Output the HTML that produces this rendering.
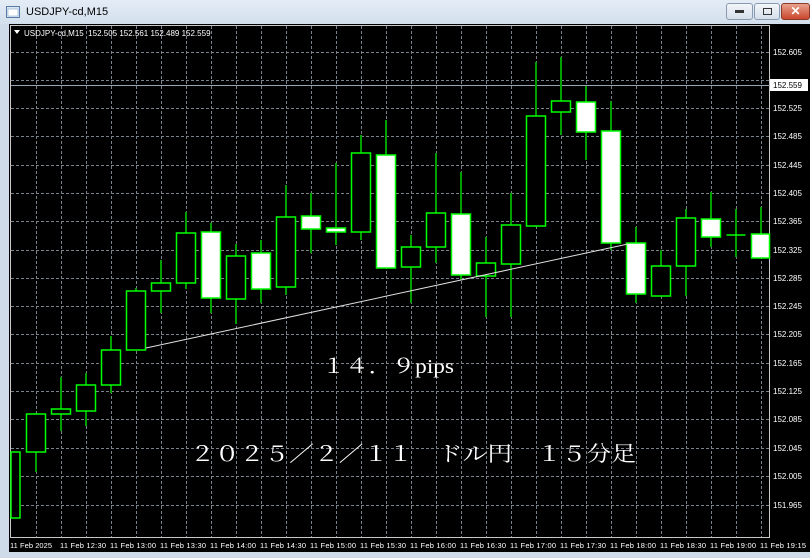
<!DOCTYPE html><html><head><meta charset="utf-8"><style>
body{margin:0;width:810px;height:558px;overflow:hidden;background:#cfdbe8;font-family:"Liberation Sans",sans-serif}
#t{position:absolute;left:0;top:0;width:810px;height:24px;background:linear-gradient(#e4edf6,#d3dfec)}
#t span{position:absolute;left:26px;top:6px;font-size:11px;color:#000}
#c{position:absolute;left:9px;top:24px;width:801px;height:528px;background:#000}
.b{position:absolute;top:3px;height:15px;border:1px solid #8a9bb0;border-radius:3px;background:linear-gradient(#f3f6fa,#d5dfea)}
</style></head><body>
<div id="t"><svg style="position:absolute;left:6px;top:5px" width="14" height="14"><rect x="0.5" y="1.5" width="13" height="11" fill="#dbe7f5" stroke="#5a7ea6"/><rect x="2" y="4" width="10" height="7" fill="#fff" stroke="#7a9cc0" stroke-width=".5"/></svg><span>USDJPY-cd,M15</span>
<div class="b" style="left:726px;width:25px"><div style="margin:6px auto;width:9px;height:3px;background:#333"></div></div>
<div class="b" style="left:754px;width:24px"><div style="margin:4px auto;width:7px;height:5px;border:1px solid #333"></div></div>
<div class="b" style="left:781px;width:27px;background:linear-gradient(#e8a28e,#c9462c);border-color:#8b3a2a;color:#fff;font-size:12px;text-align:center;line-height:15px;font-weight:bold">✕</div></div>
<div id="c"></div>
<svg style="position:absolute;left:0;top:0" width="810" height="558" font-family="Liberation Sans,sans-serif">
<rect x="10.5" y="25.5" width="759" height="512" fill="none" stroke="#c8c8c8"/>
<g stroke="#7a828c" stroke-dasharray="3,2" stroke-width="1">
<path d="M11 52.5H770M11 80.5H770M11 108.5H770M11 136.5H770M11 165.5H770M11 193.5H770M11 221.5H770M11 250.5H770M11 278.5H770M11 306.5H770M11 334.5H770M11 363.5H770M11 391.5H770M11 419.5H770M11 448.5H770M11 476.5H770M11 505.5H770"/>
<path d="M36.5 26V537M61.5 26V537M86.5 26V537M111.5 26V537M136.5 26V537M161.5 26V537M186.5 26V537M211.5 26V537M236.5 26V537M261.5 26V537M286.5 26V537M311.5 26V537M336.5 26V537M361.5 26V537M386.5 26V537M411.5 26V537M436.5 26V537M461.5 26V537M486.5 26V537M511.5 26V537M536.5 26V537M561.5 26V537M586.5 26V537M611.5 26V537M636.5 26V537M661.5 26V537M686.5 26V537M711.5 26V537M736.5 26V537M761.5 26V537"/>
</g>
<line x1="11" y1="85.5" x2="770" y2="85.5" stroke="#9aa4b0"/>
<g stroke="#00a000" stroke-width="2">
<path d="M36 413V472M61 377V431M86 373V426M111 336V393M136 288V350M161 260V313M186 212V289M211 223V313M236 244V324M261 240V303M286 185V295M311 193V253M336 163V245M361 135V240M386 120V268M411 235V303M436 153V263M461 172V280M486 237V317M511 193V317M536 62V227M561 57V135M586 86V160M611 101V250M636 227V303M661 250V296M686 209V296M711 192V247M736 209V257M761 207V258"/>
</g>
<g stroke="#00ff00" stroke-width="1.5">
<rect x="11" y="452" width="9" height="66" fill="#000"/>
<rect x="26.5" y="414" width="19" height="38" fill="#000"/>
<rect x="51.5" y="409" width="19" height="5" fill="#000"/>
<rect x="76.5" y="385" width="19" height="26" fill="#000"/>
<rect x="101.5" y="350" width="19" height="35" fill="#000"/>
<rect x="126.5" y="291" width="19" height="59" fill="#000"/>
<rect x="151.5" y="283" width="19" height="8" fill="#000"/>
<rect x="176.5" y="233" width="19" height="50" fill="#000"/>
<rect x="201.5" y="232" width="19" height="66" fill="#fff"/>
<rect x="226.5" y="256" width="19" height="43" fill="#000"/>
<rect x="251.5" y="253" width="19" height="36" fill="#fff"/>
<rect x="276.5" y="217" width="19" height="70" fill="#000"/>
<rect x="301.5" y="216" width="19" height="13" fill="#fff"/>
<rect x="326.5" y="228" width="19" height="4" fill="#fff"/>
<rect x="351.5" y="153" width="19" height="79" fill="#000"/>
<rect x="376.5" y="155" width="19" height="113" fill="#fff"/>
<rect x="401.5" y="247" width="19" height="20" fill="#000"/>
<rect x="426.5" y="213" width="19" height="34" fill="#000"/>
<rect x="451.5" y="214" width="19" height="61" fill="#fff"/>
<rect x="476.5" y="263" width="19" height="13" fill="#000"/>
<rect x="501.5" y="225" width="19" height="39" fill="#000"/>
<rect x="526.5" y="116" width="19" height="110" fill="#000"/>
<rect x="551.5" y="101" width="19" height="11" fill="#000"/>
<rect x="576.5" y="102" width="19" height="30" fill="#fff"/>
<rect x="601.5" y="131" width="19" height="112" fill="#fff"/>
<rect x="626.5" y="243" width="19" height="51" fill="#fff"/>
<rect x="651.5" y="266" width="19" height="30" fill="#000"/>
<rect x="676.5" y="218" width="19" height="48" fill="#000"/>
<rect x="701.5" y="219" width="19" height="18" fill="#fff"/>
<path d="M726.5 235H745.5"/>
<rect x="751.5" y="234" width="18" height="24" fill="#fff"/>
</g>
<line x1="146" y1="348" x2="628" y2="244" stroke="#e0e0e0" stroke-width="1"/>
<g fill="#fff" font-size="8">
<path d="M14 30l6 0-3 4z"/>
<text x="24" y="36">USDJPY-cd,M15&#160;&#160;152.505 152.561 152.489 152.559</text>
<text x="773" y="55">152.605</text><text x="773" y="111">152.525</text><text x="773" y="139">152.485</text><text x="773" y="168">152.445</text><text x="773" y="196">152.405</text><text x="773" y="224">152.365</text><text x="773" y="253">152.325</text><text x="773" y="281">152.285</text><text x="773" y="309">152.245</text><text x="773" y="337">152.205</text><text x="773" y="366">152.165</text><text x="773" y="394">152.125</text><text x="773" y="422">152.085</text><text x="773" y="451">152.045</text><text x="773" y="479">152.005</text><text x="773" y="508">151.965</text>
<rect x="770" y="79" width="38" height="12" fill="#fff"/>
<text x="773" y="88" fill="#000">152.559</text>
</g>
<g fill="#fff" font-size="7.5" lengthAdjust="spacingAndGlyphs">
<text x="10" y="548" textLength="42">11 Feb 2025</text><text x="60" y="548" textLength="46">11 Feb 12:30</text><text x="110" y="548" textLength="46">11 Feb 13:00</text><text x="160" y="548" textLength="46">11 Feb 13:30</text><text x="210" y="548" textLength="46">11 Feb 14:00</text><text x="260" y="548" textLength="46">11 Feb 14:30</text><text x="310" y="548" textLength="46">11 Feb 15:00</text><text x="360" y="548" textLength="46">11 Feb 15:30</text><text x="410" y="548" textLength="46">11 Feb 16:00</text><text x="460" y="548" textLength="46">11 Feb 16:30</text><text x="510" y="548" textLength="46">11 Feb 17:00</text><text x="560" y="548" textLength="46">11 Feb 17:30</text><text x="610" y="548" textLength="46">11 Feb 18:00</text><text x="660" y="548" textLength="46">11 Feb 18:30</text><text x="710" y="548" textLength="46">11 Feb 19:00</text><text x="760" y="548" textLength="46">11 Feb 19:15</text>
</g>
<g fill="#fff" font-family="Liberation Serif,Noto Serif CJK SC,serif">
<text x="322" y="373" font-size="20" textLength="132" lengthAdjust="spacingAndGlyphs">１４．９pips</text>
<text x="190" y="461" font-size="21" textLength="446" lengthAdjust="spacingAndGlyphs">２０２５／２／１１　ドル円　１５分足</text>
</g>
</svg>
</body></html>
